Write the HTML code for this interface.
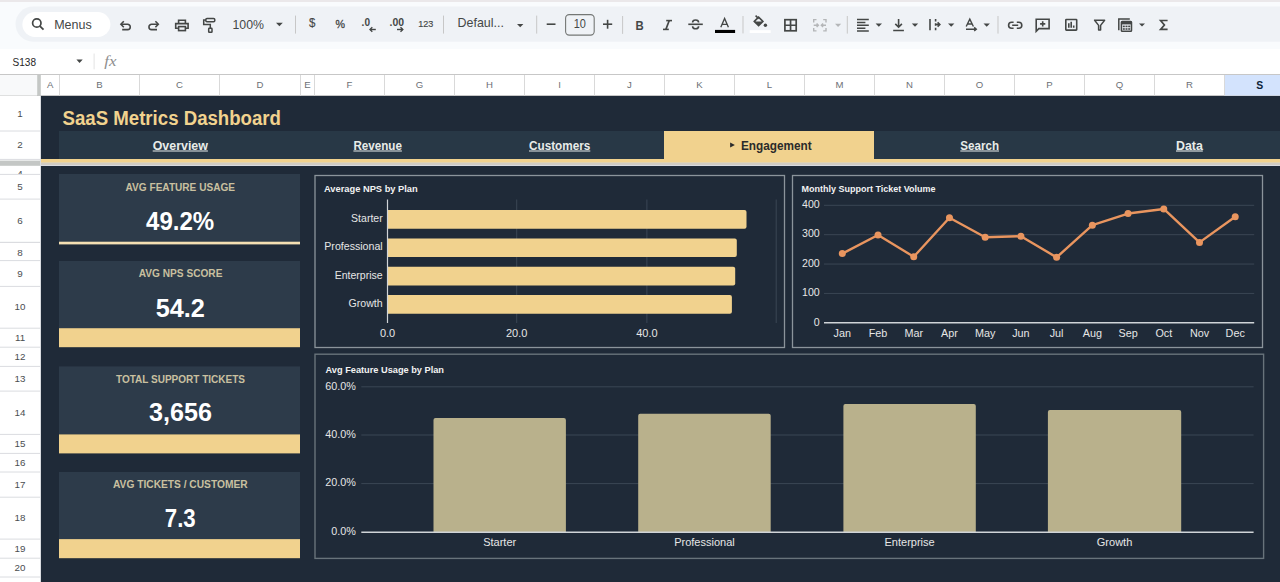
<!DOCTYPE html>
<html><head><meta charset="utf-8"><title>SaaS Metrics Dashboard</title>
<style>html,body{margin:0;padding:0;width:1280px;height:582px;overflow:hidden;background:#f9fbfd}
svg{display:block;font-family:"Liberation Sans", sans-serif}</style></head>
<body><svg width="1280" height="582" viewBox="0 0 1280 582">
<rect x="0" y="0" width="1280" height="582" fill="#f9fbfd" />
<rect x="0" y="0" width="1280" height="2" fill="#ebe8ea" />
<rect x="15.5" y="6.5" width="1300" height="35.2" fill="#eff2f6" rx="17.6" />
<rect x="22.4" y="12" width="88" height="25" fill="#ffffff" rx="12.5" />
<g fill="none" stroke="#444746" stroke-width="1.7">
<circle cx="36.8" cy="23.0" r="4.2"/>
<line x1="39.9" y1="26.1" x2="43.5" y2="29.7" stroke-width="1.8"/>
</g>
<text x="54.2" y="28.6" font-size="12.6" font-weight="normal" fill="#444746" text-anchor="start" textLength="37.6" lengthAdjust="spacingAndGlyphs" >Menus</text>
<g fill="none" stroke="#444746" stroke-width="1.6" stroke-linejoin="miter">
<path d="M123.8,21.3 L120.9,24.3 L123.8,27.3"/>
<path d="M121.2,24.3 H127.6 A2.65,2.65 0 0 1 127.6,29.6 H122.2"/>
<path d="M155.4,21.3 L158.3,24.3 L155.4,27.3"/>
<path d="M158,24.3 H151.6 A2.65,2.65 0 0 0 151.6,29.6 H157"/>
</g>
<g fill="none" stroke="#444746" stroke-width="1.6">
<path d="M178.6,23.2 V20.2 H185.4 V23.2"/>
<path d="M177.9,28.2 H175.7 V23.6 H188.1 V28.2 H185.9"/>
<rect x="178.6" y="26.6" width="6.8" height="4.0"/>
</g>
<g fill="none" stroke="#444746" stroke-width="1.5">
<rect x="205.8" y="18.5" width="9.0" height="3.3" rx="1.2"/>
<path d="M205.8,20.1 H203.7 V24.6 H210.3 V28.2"/>
<rect x="208.7" y="28.3" width="3.3" height="4.0" rx="0.6"/>
</g>
<text x="232.5" y="29.3" font-size="12.6" font-weight="normal" fill="#444746" text-anchor="start" textLength="31.5" lengthAdjust="spacingAndGlyphs" >100%</text>
<path d="M276,22.8 H282.8 L279.4,26.2 Z" fill="#444746"/>
<line x1="295.5" y1="15.6" x2="295.5" y2="33.6" stroke="#c7c7c7" stroke-width="1" />
<text x="312.3" y="27.3" font-size="12.4" font-weight="normal" fill="#444746" text-anchor="middle" textLength="6.4" lengthAdjust="spacingAndGlyphs" stroke="#444746" stroke-width="0.15">$</text>
<text x="335.6" y="27.9" font-size="11.6" font-weight="normal" fill="#444746" text-anchor="start" textLength="9.5" lengthAdjust="spacingAndGlyphs" stroke="#444746" stroke-width="0.3">%</text>
<text x="361.6" y="26.3" font-size="10.5" font-weight="bold" fill="#444746" text-anchor="start" textLength="8.4" lengthAdjust="spacingAndGlyphs" >.0</text>
<g fill="none" stroke="#444746" stroke-width="1.4"><path d="M375.8,29.5 H370"/><path d="M372.3,27.2 L370,29.5 L372.3,31.8"/>
<path d="M397,29.5 H402.8"/><path d="M400.5,27.2 L402.8,29.5 L400.5,31.8"/></g>
<text x="389.5" y="26.3" font-size="10.5" font-weight="bold" fill="#444746" text-anchor="start" textLength="14.5" lengthAdjust="spacingAndGlyphs" >.00</text>
<text x="418.2" y="27.4" font-size="9.6" font-weight="normal" fill="#444746" text-anchor="start" textLength="15.1" lengthAdjust="spacingAndGlyphs" stroke="#444746" stroke-width="0.15">123</text>
<line x1="443.5" y1="15.6" x2="443.5" y2="33.6" stroke="#c7c7c7" stroke-width="1" />
<text x="457.6" y="27.4" font-size="12.2" font-weight="normal" fill="#444746" text-anchor="start" textLength="46.3" lengthAdjust="spacingAndGlyphs" >Defaul...</text>
<path d="M517,24 H523.4 L520.2,27.2 Z" fill="#444746"/>
<line x1="536.7" y1="15.6" x2="536.7" y2="33.6" stroke="#c7c7c7" stroke-width="1" />
<line x1="546.7" y1="24.2" x2="555.5" y2="24.2" stroke="#444746" stroke-width="1.6" />
<rect x="565.6" y="14.6" width="28.6" height="20.5" rx="3.6" fill="none" stroke="#747775" stroke-width="1.1"/>
<text x="579.8" y="28.1" font-size="12.2" font-weight="normal" fill="#444746" text-anchor="middle" textLength="12.2" lengthAdjust="spacingAndGlyphs" >10</text>
<line x1="603" y1="24.2" x2="612.2" y2="24.2" stroke="#444746" stroke-width="1.6" />
<line x1="607.6" y1="19.8" x2="607.6" y2="28.7" stroke="#444746" stroke-width="1.6" />
<line x1="622.6" y1="16" x2="622.6" y2="33.9" stroke="#c7c7c7" stroke-width="1" />
<text x="635.6" y="29.7" font-size="12.8" font-weight="bold" fill="#444746" text-anchor="start" textLength="8.2" lengthAdjust="spacingAndGlyphs" >B</text>
<g fill="none" stroke="#444746" stroke-width="1.6">
<path d="M666.2,20.6 H672"/><path d="M663,29.4 H668.8"/><path d="M669.2,20.6 L665.9,29.4"/>
<path d="M688.3,24.3 H702.8"/>
<path d="M692.6,22.6 A3,2.6 0 0 1 698.6,22.6"/><path d="M692.6,26.2 A3,2.6 0 0 0 698.6,26.2"/>
</g>
<path d="M720.8,27.3 L724.6,18.5 L728.4,27.3 M722.2,24.3 H727" fill="none" stroke="#444746" stroke-width="1.35"/>
<rect x="715" y="29.9" width="20.1" height="3.1" fill="#000000" />
<line x1="743" y1="16" x2="743" y2="33.4" stroke="#c7c7c7" stroke-width="1" />
<g fill="#444746"><path d="M754.3,21.4 L758.6,17.1 L762.9,21.4 L758.6,25.7 Z" fill="none" stroke="#444746" stroke-width="1.6"/><path d="M754.3,21.4 H762.9 L758.6,25.7 Z"/><line x1="755.6" y1="15.6" x2="758.6" y2="18.6" stroke="#444746" stroke-width="1.5"/><circle cx="765.4" cy="25.3" r="1.7"/></g>
<rect x="749.7" y="30.2" width="21" height="2.8" fill="#ffffff" />
<g fill="none" stroke="#444746" stroke-width="1.7"><rect x="784.9" y="19.7" width="11.3" height="11.1"/><path d="M790.55,19.7 V30.8 M784.9,25.25 H796.2"/></g>
<g fill="none" stroke="#b4b6b8" stroke-width="1.4"><path d="M816.5,19.6 H813.7 V22.5 M813.7,28.0 V30.9 H816.5 M823.2,19.6 H826 V22.5 M826,28.0 V30.9 H823.2"/><path d="M813.7,25.2 H818.4 M816.6,23.4 L818.4,25.2 L816.6,27 M826,25.2 H821.3 M823.1,23.4 L821.3,25.2 L823.1,27"/></g>
<path d="M835,23.7 H841.2 L838.1,26.9 Z" fill="#b4b6b8"/>
<line x1="847.3" y1="16" x2="847.3" y2="33.6" stroke="#c7c7c7" stroke-width="1" />
<g stroke="#444746" stroke-width="1.5"><path d="M857,19.5 H868.8 M857,22.4 H865.4 M857,25.3 H868.8 M857,28.2 H865.4 M857,31.0 H868.8"/></g>
<path d="M875.6,23.5 H882.0 L878.8000000000001,26.8 Z" fill="#444746"/>
<g fill="none" stroke="#444746" stroke-width="1.6"><path d="M898.6,18.9 V27.2 M895.3,23.9 L898.6,27.2 L901.9,23.9 M893.2,30.5 H903.9"/></g>
<path d="M911.8,23.5 H918.1999999999999 L915.0,26.8 Z" fill="#444746"/>
<g fill="none" stroke="#444746" stroke-width="1.6"><path d="M930,19 V30.2"/><path d="M935.6,19 V21.4 M935.6,23.3 V25.7 M935.6,27.8 V30.2" /><path d="M935.6,24.5 H939.6 M937.6,22.4 L939.8,24.5 L937.6,26.6"/></g>
<path d="M948,23.5 H954.4 L951.2,26.8 Z" fill="#444746"/>
<g fill="none" stroke="#444746" stroke-width="1.4"><path d="M966.2,26.5 L969.8,19.1 L973.4,26.5 M967.5,24 H972.1"/><path d="M966,29.2 H976.2 M974.2,27.4 L976.3,29.2 L974.2,31"/></g>
<path d="M983.5,23.5 H989.9 L986.7,26.8 Z" fill="#444746"/>
<line x1="998" y1="16" x2="998" y2="33.6" stroke="#c7c7c7" stroke-width="1" />
<g fill="none" stroke="#444746" stroke-width="1.6"><path d="M1013.6,22.3 H1011.6 A3,3 0 0 0 1011.6,28.3 H1013.6 M1016.8,22.3 H1018.8 A3,3 0 0 1 1018.8,28.3 H1016.8 M1012.2,25.3 H1018.2"/></g>
<g fill="none" stroke="#444746" stroke-width="1.6"><path d="M1036.2,31.2 V19.2 H1049.1 V28.6 H1038.8 Z"/><path d="M1042.7,21.3 V26.5 M1040.1,23.9 H1045.3"/></g>
<g fill="none" stroke="#444746" stroke-width="1.6"><rect x="1065.8" y="19.5" width="10.9" height="10.6" rx="0.6"/><path d="M1068.8,23.3 V27.7 M1071.2,21.8 V27.7 M1073.7,25.6 V27.7"/></g>
<path d="M1094.6,20.2 H1104.6 L1100.6,25.4 V30 H1098.6 V25.4 Z" fill="none" stroke="#444746" stroke-width="1.5" stroke-linejoin="round"/>
<g fill="none" stroke="#444746" stroke-width="1.5"><path d="M1118.8,30.2 V19.1 H1129.8"/><rect x="1121.4" y="21.4" width="10.1" height="9.8" rx="0.8"/></g>
<g fill="#444746"><rect x="1121.4" y="21.4" width="10.1" height="3"/><rect x="1122.8" y="25.6" width="2" height="1.6"/><rect x="1125.5" y="25.6" width="2" height="1.6"/><rect x="1128.2" y="25.6" width="2" height="1.6"/><rect x="1122.8" y="28.2" width="2" height="1.6"/><rect x="1125.5" y="28.2" width="2" height="1.6"/><rect x="1128.2" y="28.2" width="2" height="1.6"/></g>
<path d="M1139,23.4 H1145 L1142,26.5 Z" fill="#444746"/>
<path d="M1167.6,20.5 H1160.6 L1164.4,25 L1160.6,29.4 H1167.6" fill="none" stroke="#444746" stroke-width="1.7"/>
<rect x="0" y="49" width="1280" height="25.5" fill="#ffffff" />
<text x="12.5" y="65.9" font-size="11.6" font-weight="normal" fill="#1f1f1f" text-anchor="start" textLength="23.5" lengthAdjust="spacingAndGlyphs" >S138</text>
<path d="M76.4,59.6 H82.7 L79.55,62.9 Z" fill="#444746"/>
<line x1="94.1" y1="53.5" x2="94.1" y2="69.3" stroke="#e3e3e3" stroke-width="1" />
<text x="104.2" y="66.3" font-family="'Liberation Serif', serif" font-style="italic" font-size="14" fill="#8e8e8e" textLength="12.2" lengthAdjust="spacingAndGlyphs">fx</text>
<rect x="0" y="74.5" width="1280" height="21" fill="#ffffff" />
<line x1="0" y1="74.5" x2="1280" y2="74.5" stroke="#c7c7c7" stroke-width="1" />
<line x1="0" y1="95.5" x2="1280" y2="95.5" stroke="#c7c7c7" stroke-width="1" />
<rect x="0" y="75" width="37" height="20.5" fill="#f8f9fa" />
<rect x="37.2" y="75" width="3.6" height="20.5" fill="#c4c7c5" />
<rect x="1224.5" y="75" width="60" height="20.5" fill="#d3e3fd" />
<line x1="59.5" y1="75" x2="59.5" y2="95.5" stroke="#d9d9d9" stroke-width="1" />
<text x="50.25" y="88.4" font-size="9.6" font-weight="normal" fill="#6c7075" text-anchor="middle" >A</text>
<line x1="139.5" y1="75" x2="139.5" y2="95.5" stroke="#d9d9d9" stroke-width="1" />
<text x="99.5" y="88.4" font-size="9.6" font-weight="normal" fill="#6c7075" text-anchor="middle" >B</text>
<line x1="219.5" y1="75" x2="219.5" y2="95.5" stroke="#d9d9d9" stroke-width="1" />
<text x="179.5" y="88.4" font-size="9.6" font-weight="normal" fill="#6c7075" text-anchor="middle" >C</text>
<line x1="300.5" y1="75" x2="300.5" y2="95.5" stroke="#d9d9d9" stroke-width="1" />
<text x="260.0" y="88.4" font-size="9.6" font-weight="normal" fill="#6c7075" text-anchor="middle" >D</text>
<line x1="314.5" y1="75" x2="314.5" y2="95.5" stroke="#d9d9d9" stroke-width="1" />
<text x="307.5" y="88.4" font-size="9.6" font-weight="normal" fill="#6c7075" text-anchor="middle" >E</text>
<line x1="384.5" y1="75" x2="384.5" y2="95.5" stroke="#d9d9d9" stroke-width="1" />
<text x="349.5" y="88.4" font-size="9.6" font-weight="normal" fill="#6c7075" text-anchor="middle" >F</text>
<line x1="454.5" y1="75" x2="454.5" y2="95.5" stroke="#d9d9d9" stroke-width="1" />
<text x="419.5" y="88.4" font-size="9.6" font-weight="normal" fill="#6c7075" text-anchor="middle" >G</text>
<line x1="524.5" y1="75" x2="524.5" y2="95.5" stroke="#d9d9d9" stroke-width="1" />
<text x="489.5" y="88.4" font-size="9.6" font-weight="normal" fill="#6c7075" text-anchor="middle" >H</text>
<line x1="594.5" y1="75" x2="594.5" y2="95.5" stroke="#d9d9d9" stroke-width="1" />
<text x="559.5" y="88.4" font-size="9.6" font-weight="normal" fill="#6c7075" text-anchor="middle" >I</text>
<line x1="664.5" y1="75" x2="664.5" y2="95.5" stroke="#d9d9d9" stroke-width="1" />
<text x="629.5" y="88.4" font-size="9.6" font-weight="normal" fill="#6c7075" text-anchor="middle" >J</text>
<line x1="734.5" y1="75" x2="734.5" y2="95.5" stroke="#d9d9d9" stroke-width="1" />
<text x="699.5" y="88.4" font-size="9.6" font-weight="normal" fill="#6c7075" text-anchor="middle" >K</text>
<line x1="804.5" y1="75" x2="804.5" y2="95.5" stroke="#d9d9d9" stroke-width="1" />
<text x="769.5" y="88.4" font-size="9.6" font-weight="normal" fill="#6c7075" text-anchor="middle" >L</text>
<line x1="874.5" y1="75" x2="874.5" y2="95.5" stroke="#d9d9d9" stroke-width="1" />
<text x="839.5" y="88.4" font-size="9.6" font-weight="normal" fill="#6c7075" text-anchor="middle" >M</text>
<line x1="944.5" y1="75" x2="944.5" y2="95.5" stroke="#d9d9d9" stroke-width="1" />
<text x="909.5" y="88.4" font-size="9.6" font-weight="normal" fill="#6c7075" text-anchor="middle" >N</text>
<line x1="1014.5" y1="75" x2="1014.5" y2="95.5" stroke="#d9d9d9" stroke-width="1" />
<text x="979.5" y="88.4" font-size="9.6" font-weight="normal" fill="#6c7075" text-anchor="middle" >O</text>
<line x1="1084.5" y1="75" x2="1084.5" y2="95.5" stroke="#d9d9d9" stroke-width="1" />
<text x="1049.5" y="88.4" font-size="9.6" font-weight="normal" fill="#6c7075" text-anchor="middle" >P</text>
<line x1="1154.5" y1="75" x2="1154.5" y2="95.5" stroke="#d9d9d9" stroke-width="1" />
<text x="1119.5" y="88.4" font-size="9.6" font-weight="normal" fill="#6c7075" text-anchor="middle" >Q</text>
<line x1="1224.5" y1="75" x2="1224.5" y2="95.5" stroke="#d9d9d9" stroke-width="1" />
<text x="1189.5" y="88.4" font-size="9.6" font-weight="normal" fill="#6c7075" text-anchor="middle" >R</text>
<line x1="1294.5" y1="75" x2="1294.5" y2="95.5" stroke="#d9d9d9" stroke-width="1" />
<text x="1259.7" y="88.6" font-size="10.4" font-weight="bold" fill="#0b1f3a" text-anchor="middle" >S</text>
<rect x="0" y="96" width="41" height="486" fill="#ffffff" />
<line x1="0" y1="131" x2="41" y2="131" stroke="#dadce0" stroke-width="1" />
<text x="20" y="116.5" font-size="9.8" font-weight="normal" fill="#4a4d50" text-anchor="middle" >1</text>
<line x1="0" y1="159.4" x2="41" y2="159.4" stroke="#dadce0" stroke-width="1" />
<text x="20" y="148.2" font-size="9.8" font-weight="normal" fill="#4a4d50" text-anchor="middle" >2</text>
<line x1="0" y1="174.4" x2="41" y2="174.4" stroke="#dadce0" stroke-width="1" />
<clipPath id="c4"><rect x="0" y="166" width="41" height="8"/></clipPath>
<text x="20" y="177.0" font-size="9.8" font-weight="normal" fill="#4a4d50" text-anchor="middle" clip-path="url(#c4)">4</text>
<line x1="0" y1="199.1" x2="41" y2="199.1" stroke="#dadce0" stroke-width="1" />
<text x="20" y="189.75" font-size="9.8" font-weight="normal" fill="#4a4d50" text-anchor="middle" >5</text>
<line x1="0" y1="242.4" x2="41" y2="242.4" stroke="#dadce0" stroke-width="1" />
<text x="20" y="223.75" font-size="9.8" font-weight="normal" fill="#4a4d50" text-anchor="middle" >6</text>
<line x1="0" y1="260.6" x2="41" y2="260.6" stroke="#dadce0" stroke-width="1" />
<text x="20" y="255.5" font-size="9.8" font-weight="normal" fill="#4a4d50" text-anchor="middle" >8</text>
<line x1="0" y1="286.4" x2="41" y2="286.4" stroke="#dadce0" stroke-width="1" />
<text x="20" y="276.5" font-size="9.8" font-weight="normal" fill="#4a4d50" text-anchor="middle" >9</text>
<line x1="0" y1="328.2" x2="41" y2="328.2" stroke="#dadce0" stroke-width="1" />
<text x="20" y="310.3" font-size="9.8" font-weight="normal" fill="#4a4d50" text-anchor="middle" >10</text>
<line x1="0" y1="347.2" x2="41" y2="347.2" stroke="#dadce0" stroke-width="1" />
<text x="20" y="340.7" font-size="9.8" font-weight="normal" fill="#4a4d50" text-anchor="middle" >11</text>
<line x1="0" y1="366.4" x2="41" y2="366.4" stroke="#dadce0" stroke-width="1" />
<text x="20" y="359.8" font-size="9.8" font-weight="normal" fill="#4a4d50" text-anchor="middle" >12</text>
<line x1="0" y1="391.1" x2="41" y2="391.1" stroke="#dadce0" stroke-width="1" />
<text x="20" y="381.75" font-size="9.8" font-weight="normal" fill="#4a4d50" text-anchor="middle" >13</text>
<line x1="0" y1="434.4" x2="41" y2="434.4" stroke="#dadce0" stroke-width="1" />
<text x="20" y="415.75" font-size="9.8" font-weight="normal" fill="#4a4d50" text-anchor="middle" >14</text>
<line x1="0" y1="453.4" x2="41" y2="453.4" stroke="#dadce0" stroke-width="1" />
<text x="20" y="446.9" font-size="9.8" font-weight="normal" fill="#4a4d50" text-anchor="middle" >15</text>
<line x1="0" y1="472" x2="41" y2="472" stroke="#dadce0" stroke-width="1" />
<text x="20" y="465.7" font-size="9.8" font-weight="normal" fill="#4a4d50" text-anchor="middle" >16</text>
<line x1="0" y1="497.2" x2="41" y2="497.2" stroke="#dadce0" stroke-width="1" />
<text x="20" y="487.6" font-size="9.8" font-weight="normal" fill="#4a4d50" text-anchor="middle" >17</text>
<line x1="0" y1="539.1" x2="41" y2="539.1" stroke="#dadce0" stroke-width="1" />
<text x="20" y="521.15" font-size="9.8" font-weight="normal" fill="#4a4d50" text-anchor="middle" >18</text>
<line x1="0" y1="558.2" x2="41" y2="558.2" stroke="#dadce0" stroke-width="1" />
<text x="20" y="551.65" font-size="9.8" font-weight="normal" fill="#4a4d50" text-anchor="middle" >19</text>
<line x1="0" y1="577" x2="41" y2="577" stroke="#dadce0" stroke-width="1" />
<text x="20" y="570.6" font-size="9.8" font-weight="normal" fill="#4a4d50" text-anchor="middle" >20</text>
<line x1="0" y1="242.4" x2="41" y2="242.4" stroke="#dadce0" stroke-width="1" />
<rect x="0" y="160.6" width="41" height="5.2" fill="#c4c7c5" />
<line x1="40.5" y1="96" x2="40.5" y2="582" stroke="#dadce0" stroke-width="1" />
<rect x="41" y="96" width="1239" height="486" fill="#1f2a38" />
<text x="62.5" y="125" font-size="20" font-weight="bold" fill="#f1d28e" text-anchor="start" textLength="218.5" lengthAdjust="spacingAndGlyphs" >SaaS Metrics Dashboard</text>
<rect x="59" y="131" width="1221" height="28" fill="#283846" />
<rect x="664" y="131" width="210" height="28" fill="#f1d28e" />
<rect x="41" y="159" width="1239" height="3" fill="#f1d28e" />
<rect x="41" y="162" width="1239" height="1" fill="#e2d3b0" />
<rect x="41" y="163" width="1239" height="2" fill="#d1ccc3" />
<rect x="41" y="165" width="1239" height="1" fill="#d9dbe1" />
<text x="152.7" y="149.5" font-size="12.5" font-weight="bold" fill="#e8ece9" text-anchor="start" textLength="55.2" lengthAdjust="spacingAndGlyphs" >Overview</text>
<line x1="152.7" y1="151" x2="207.9" y2="151" stroke="#e8ece9" stroke-width="1.1" />
<text x="353.4" y="149.5" font-size="12.5" font-weight="bold" fill="#e8ece9" text-anchor="start" textLength="48.5" lengthAdjust="spacingAndGlyphs" >Revenue</text>
<line x1="353.4" y1="151" x2="401.9" y2="151" stroke="#e8ece9" stroke-width="1.1" />
<text x="529" y="149.5" font-size="12.5" font-weight="bold" fill="#e8ece9" text-anchor="start" textLength="61.3" lengthAdjust="spacingAndGlyphs" >Customers</text>
<line x1="529" y1="151" x2="590.3" y2="151" stroke="#e8ece9" stroke-width="1.1" />
<text x="960.3" y="149.5" font-size="12.5" font-weight="bold" fill="#e8ece9" text-anchor="start" textLength="38.7" lengthAdjust="spacingAndGlyphs" >Search</text>
<line x1="960.3" y1="151" x2="999" y2="151" stroke="#e8ece9" stroke-width="1.1" />
<text x="1176" y="149.5" font-size="12.5" font-weight="bold" fill="#e8ece9" text-anchor="start" textLength="26.8" lengthAdjust="spacingAndGlyphs" >Data</text>
<line x1="1176" y1="151" x2="1202.8" y2="151" stroke="#e8ece9" stroke-width="1.1" />
<path d="M730.1,142.6 L734.9,145 L730.1,147.4 Z" fill="#2b2b2b"/>
<text x="741" y="149.9" font-size="12.5" font-weight="bold" fill="#2b2b2b" text-anchor="start" textLength="70.7" lengthAdjust="spacingAndGlyphs" >Engagement</text>
<rect x="59" y="174" width="241" height="67.69999999999999" fill="#2d3b4a" />
<rect x="59" y="241.7" width="241" height="2.700000000000017" fill="#f5e0b3" />
<text x="125.6" y="190.8" font-size="10.9" font-weight="bold" fill="#c9c0a0" text-anchor="start" textLength="109.4" lengthAdjust="spacingAndGlyphs" >AVG FEATURE USAGE</text>
<text x="146" y="229.6" font-size="25" font-weight="bold" fill="#ffffff" text-anchor="start" textLength="68.2" lengthAdjust="spacingAndGlyphs" >49.2%</text>
<rect x="59" y="261" width="241" height="67.19999999999999" fill="#2d3b4a" />
<rect x="59" y="328.2" width="241" height="19.0" fill="#f1d28e" />
<text x="138.8" y="277.4" font-size="10.9" font-weight="bold" fill="#c9c0a0" text-anchor="start" textLength="83.6" lengthAdjust="spacingAndGlyphs" >AVG NPS SCORE</text>
<text x="155.7" y="317" font-size="25" font-weight="bold" fill="#ffffff" text-anchor="start" textLength="49.2" lengthAdjust="spacingAndGlyphs" >54.2</text>
<rect x="59" y="366.4" width="241" height="68.0" fill="#2d3b4a" />
<rect x="59" y="434.4" width="241" height="19.0" fill="#f1d28e" />
<text x="116" y="382.8" font-size="10.9" font-weight="bold" fill="#c9c0a0" text-anchor="start" textLength="129" lengthAdjust="spacingAndGlyphs" >TOTAL SUPPORT TICKETS</text>
<text x="149" y="421.4" font-size="25" font-weight="bold" fill="#ffffff" text-anchor="start" textLength="63" lengthAdjust="spacingAndGlyphs" >3,656</text>
<rect x="59" y="472" width="241" height="67.10000000000002" fill="#2d3b4a" />
<rect x="59" y="539.1" width="241" height="19.100000000000023" fill="#f1d28e" />
<text x="113" y="488.4" font-size="10.9" font-weight="bold" fill="#c9c0a0" text-anchor="start" textLength="134.6" lengthAdjust="spacingAndGlyphs" >AVG TICKETS / CUSTOMER</text>
<text x="164.8" y="526.6" font-size="25" font-weight="bold" fill="#ffffff" text-anchor="start" textLength="30.9" lengthAdjust="spacingAndGlyphs" >7.3</text>
<rect x="315" y="175.5" width="469.5" height="172" fill="none" stroke="#8b949b" stroke-width="1.3"/>
<rect x="792.5" y="175.5" width="470" height="172" fill="none" stroke="#8b949b" stroke-width="1.3"/>
<rect x="315" y="354.2" width="948.6" height="204.2" fill="none" stroke="#68737b" stroke-width="1.4"/>
<text x="324" y="191.9" font-size="9.3" font-weight="bold" fill="#f2f2f2" text-anchor="start" textLength="93.7" lengthAdjust="spacingAndGlyphs" >Average NPS by Plan</text>
<line x1="516.7" y1="199.5" x2="516.7" y2="323" stroke="#3a4654" stroke-width="1" />
<line x1="646.9" y1="199.5" x2="646.9" y2="323" stroke="#3a4654" stroke-width="1" />
<line x1="776.2" y1="199.5" x2="776.2" y2="323" stroke="#3a4654" stroke-width="1" />
<path d="M388,210 H744.5 Q746.5,210 746.5,212 V226.7 Q746.5,228.7 744.5,228.7 H388 Z" fill="#f1d28e"/>
<text x="382.7" y="222" font-size="11" font-weight="normal" fill="#e6e6e6" text-anchor="end" textLength="31.6" lengthAdjust="spacingAndGlyphs" >Starter</text>
<path d="M388,238.4 H734.8 Q736.8,238.4 736.8,240.4 V255.1 Q736.8,257.1 734.8,257.1 H388 Z" fill="#f1d28e"/>
<text x="382.7" y="250.4" font-size="11" font-weight="normal" fill="#e6e6e6" text-anchor="end" textLength="58.4" lengthAdjust="spacingAndGlyphs" >Professional</text>
<path d="M388,266.7 H733.2 Q735.2,266.7 735.2,268.7 V283.4 Q735.2,285.4 733.2,285.4 H388 Z" fill="#f1d28e"/>
<text x="382.7" y="278.8" font-size="11" font-weight="normal" fill="#e6e6e6" text-anchor="end" textLength="48" lengthAdjust="spacingAndGlyphs" >Enterprise</text>
<path d="M388,295.1 H729.9 Q731.9,295.1 731.9,297.1 V311.8 Q731.9,313.8 729.9,313.8 H388 Z" fill="#f1d28e"/>
<text x="382.7" y="306.9" font-size="11" font-weight="normal" fill="#e6e6e6" text-anchor="end" textLength="34.1" lengthAdjust="spacingAndGlyphs" >Growth</text>
<line x1="387.5" y1="199.5" x2="387.5" y2="323" stroke="#d0d4d8" stroke-width="1.2" />
<text x="387.6" y="336.9" font-size="11" font-weight="normal" fill="#e6e6e6" text-anchor="middle" >0.0</text>
<text x="516.7" y="336.9" font-size="11" font-weight="normal" fill="#e6e6e6" text-anchor="middle" >20.0</text>
<text x="646.9" y="336.9" font-size="11" font-weight="normal" fill="#e6e6e6" text-anchor="middle" >40.0</text>
<text x="801.6" y="191.9" font-size="9.1" font-weight="bold" fill="#f2f2f2" text-anchor="start" textLength="134" lengthAdjust="spacingAndGlyphs" >Monthly Support Ticket Volume</text>
<text x="819.7" y="325.5" font-size="10.6" font-weight="normal" fill="#e6e6e6" text-anchor="end" >0</text>
<line x1="824" y1="293.43" x2="1254.2" y2="293.43" stroke="#3a4654" stroke-width="1" />
<text x="819.7" y="296.12" font-size="10.6" font-weight="normal" fill="#e6e6e6" text-anchor="end" >100</text>
<line x1="824" y1="264.05" x2="1254.2" y2="264.05" stroke="#3a4654" stroke-width="1" />
<text x="819.7" y="266.75" font-size="10.6" font-weight="normal" fill="#e6e6e6" text-anchor="end" >200</text>
<line x1="824" y1="234.68" x2="1254.2" y2="234.68" stroke="#3a4654" stroke-width="1" />
<text x="819.7" y="237.38" font-size="10.6" font-weight="normal" fill="#e6e6e6" text-anchor="end" >300</text>
<line x1="824" y1="205.3" x2="1254.2" y2="205.3" stroke="#3a4654" stroke-width="1" />
<text x="819.7" y="208.0" font-size="10.6" font-weight="normal" fill="#e6e6e6" text-anchor="end" >400</text>
<line x1="824" y1="322.8" x2="1254.2" y2="322.8" stroke="#d0d4d8" stroke-width="1.6" />
<text x="842.3" y="336.6" font-size="10.8" font-weight="normal" fill="#e6e6e6" text-anchor="middle" >Jan</text>
<text x="878.02" y="336.6" font-size="10.8" font-weight="normal" fill="#e6e6e6" text-anchor="middle" >Feb</text>
<text x="913.74" y="336.6" font-size="10.8" font-weight="normal" fill="#e6e6e6" text-anchor="middle" >Mar</text>
<text x="949.46" y="336.6" font-size="10.8" font-weight="normal" fill="#e6e6e6" text-anchor="middle" >Apr</text>
<text x="985.18" y="336.6" font-size="10.8" font-weight="normal" fill="#e6e6e6" text-anchor="middle" >May</text>
<text x="1020.9" y="336.6" font-size="10.8" font-weight="normal" fill="#e6e6e6" text-anchor="middle" >Jun</text>
<text x="1056.62" y="336.6" font-size="10.8" font-weight="normal" fill="#e6e6e6" text-anchor="middle" >Jul</text>
<text x="1092.34" y="336.6" font-size="10.8" font-weight="normal" fill="#e6e6e6" text-anchor="middle" >Aug</text>
<text x="1128.06" y="336.6" font-size="10.8" font-weight="normal" fill="#e6e6e6" text-anchor="middle" >Sep</text>
<text x="1163.78" y="336.6" font-size="10.8" font-weight="normal" fill="#e6e6e6" text-anchor="middle" >Oct</text>
<text x="1199.5" y="336.6" font-size="10.8" font-weight="normal" fill="#e6e6e6" text-anchor="middle" >Nov</text>
<text x="1235.22" y="336.6" font-size="10.8" font-weight="normal" fill="#e6e6e6" text-anchor="middle" >Dec</text>
<polyline points="842.3,253.56 878.02,235.03 913.74,256.71 949.46,217.78 985.18,237.2 1020.9,236.2 1056.62,257.35 1092.34,225.16 1128.06,213.53 1163.78,208.94 1199.5,242.4 1235.22,216.76" fill="none" stroke="#e9955f" stroke-width="2.4" stroke-linejoin="round"/>
<circle cx="842.3" cy="253.56" r="3.5" fill="#e9955f"/>
<circle cx="878.02" cy="235.03" r="3.5" fill="#e9955f"/>
<circle cx="913.74" cy="256.71" r="3.5" fill="#e9955f"/>
<circle cx="949.46" cy="217.78" r="3.5" fill="#e9955f"/>
<circle cx="985.18" cy="237.2" r="3.5" fill="#e9955f"/>
<circle cx="1020.9" cy="236.2" r="3.5" fill="#e9955f"/>
<circle cx="1056.62" cy="257.35" r="3.5" fill="#e9955f"/>
<circle cx="1092.34" cy="225.16" r="3.5" fill="#e9955f"/>
<circle cx="1128.06" cy="213.53" r="3.5" fill="#e9955f"/>
<circle cx="1163.78" cy="208.94" r="3.5" fill="#e9955f"/>
<circle cx="1199.5" cy="242.4" r="3.5" fill="#e9955f"/>
<circle cx="1235.22" cy="216.76" r="3.5" fill="#e9955f"/>
<text x="325.5" y="372.8" font-size="9.3" font-weight="bold" fill="#f2f2f2" text-anchor="start" textLength="118.5" lengthAdjust="spacingAndGlyphs" >Avg Feature Usage by Plan</text>
<line x1="361.3" y1="386.8" x2="1253.6" y2="386.8" stroke="#3a4654" stroke-width="1" />
<text x="355.9" y="389.6" font-size="10.8" font-weight="normal" fill="#e6e6e6" text-anchor="end" >60.0%</text>
<line x1="361.3" y1="435" x2="1253.6" y2="435" stroke="#3a4654" stroke-width="1" />
<text x="355.9" y="437.8" font-size="10.8" font-weight="normal" fill="#e6e6e6" text-anchor="end" >40.0%</text>
<line x1="361.3" y1="483.6" x2="1253.6" y2="483.6" stroke="#3a4654" stroke-width="1" />
<text x="355.9" y="486.40000000000003" font-size="10.8" font-weight="normal" fill="#e6e6e6" text-anchor="end" >20.0%</text>
<text x="355.9" y="535.0999999999999" font-size="10.8" font-weight="normal" fill="#e6e6e6" text-anchor="end" >0.0%</text>
<path d="M433.5,532.3 V420.1 Q433.5,418.1 435.5,418.1 H563.9 Q565.9,418.1 565.9,420.1 V532.3 Z" fill="#b9b18c"/>
<text x="499.7" y="546" font-size="11" font-weight="normal" fill="#e6e6e6" text-anchor="middle" >Starter</text>
<path d="M638.2,532.3 V415.8 Q638.2,413.8 640.2,413.8 H768.7 Q770.7,413.8 770.7,415.8 V532.3 Z" fill="#b9b18c"/>
<text x="704.45" y="546" font-size="11" font-weight="normal" fill="#e6e6e6" text-anchor="middle" >Professional</text>
<path d="M843.4,532.3 V406.1 Q843.4,404.1 845.4,404.1 H973.8 Q975.8,404.1 975.8,406.1 V532.3 Z" fill="#b9b18c"/>
<text x="909.6" y="546" font-size="11" font-weight="normal" fill="#e6e6e6" text-anchor="middle" >Enterprise</text>
<path d="M1047.9,532.3 V412 Q1047.9,410 1049.9,410 H1179.2 Q1181.2,410 1181.2,412 V532.3 Z" fill="#b9b18c"/>
<text x="1114.55" y="546" font-size="11" font-weight="normal" fill="#e6e6e6" text-anchor="middle" >Growth</text>
<line x1="361.3" y1="532.3" x2="1253.6" y2="532.3" stroke="#d0d4d8" stroke-width="1.6" />
</svg></body></html>
